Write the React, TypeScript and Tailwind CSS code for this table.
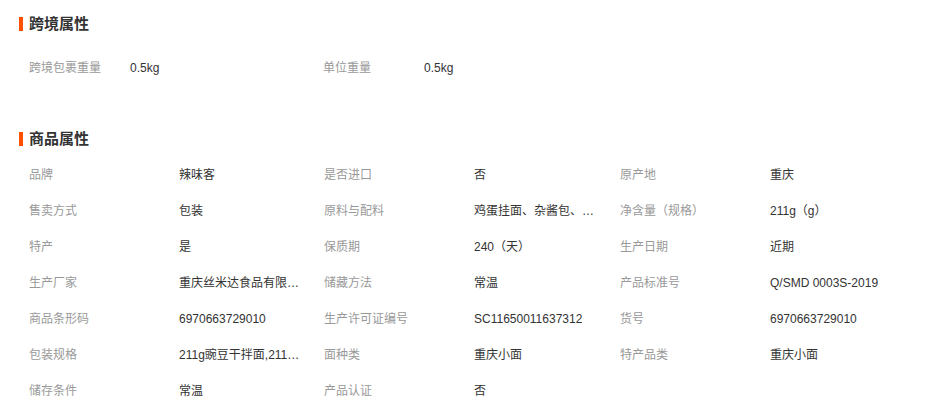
import React from "react";

const font = { fontFamily: '"Liberation Sans", "Noto Sans CJK SC", sans-serif' };

function Heading({ title }: { title: string }) {
  return (
    <div className="flex items-center h-[20px] pl-[19px]">
      <span className="w-[4px] h-[14px] bg-[#ff5000]" />
      <span className="ml-[6px] text-[15px] leading-[20px] font-bold text-[#333]">{title}</span>
    </div>
  );
}

type Cell = [string, string];

const cross: Cell[] = [
  ["跨境包裹重量", "0.5kg"],
  ["单位重量", "0.5kg"],
];

const attrs: Cell[] = [
  ["品牌", "辣味客"],
  ["是否进口", "否"],
  ["原产地", "重庆"],
  ["售卖方式", "包装"],
  ["原料与配料", "鸡蛋挂面、杂酱包、香菜包、葱花包"],
  ["净含量（规格）", "211g（g）"],
  ["特产", "是"],
  ["保质期", "240（天）"],
  ["生产日期", "近期"],
  ["生产厂家", "重庆丝米达食品有限公司"],
  ["储藏方法", "常温"],
  ["产品标准号", "Q/SMD 0003S-2019"],
  ["商品条形码", "6970663729010"],
  ["生产许可证编号", "SC11650011637312"],
  ["货号", "6970663729010"],
  ["包装规格", "211g豌豆干拌面,211g重庆小面"],
  ["面种类", "重庆小面"],
  ["特产品类", "重庆小面"],
  ["储存条件", "常温"],
  ["产品认证", "否"],
];

export default function App() {
  return (
    <div className="w-[935px] h-[402px] bg-white overflow-hidden text-[12px]" style={font}>
      <div className="pt-[14px]">
        <Heading title="跨境属性" />
      </div>
      <div className="mt-[16px] pl-[29px] grid grid-cols-[294px_294px_294px]">
        {cross.map(([k, v]) => (
          <div key={k} className="flex h-[36px] items-center">
            <span className="w-[101px] shrink-0 text-[#999] whitespace-nowrap">{k}</span>
            <span className="text-[#333]">{v}</span>
          </div>
        ))}
      </div>
      <div className="mt-[43px]">
        <Heading title="商品属性" />
      </div>
      <div className="mt-[8px] pl-[29px] grid grid-cols-[295px_296px_296px]">
        {attrs.map(([k, v]) => (
          <div key={k} className="flex h-[36px] items-center">
            <span className="w-[150px] shrink-0 text-[#999] whitespace-nowrap">{k}</span>
            <span className="max-w-[124px] text-[#333] whitespace-nowrap overflow-hidden text-ellipsis">{v}</span>
          </div>
        ))}
      </div>
    </div>
  );
}
